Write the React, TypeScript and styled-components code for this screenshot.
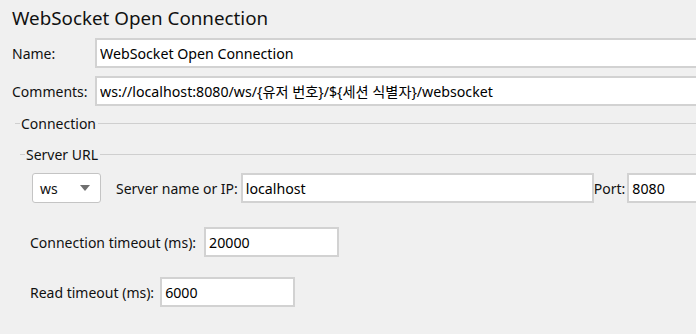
import React from 'react';
import styled, { createGlobalStyle } from 'styled-components';

const GlobalStyle = createGlobalStyle`
  html, body {
    margin: 0;
    padding: 0;
    background: #f0f0f0;
    overflow: hidden;
  }
  body {
    font-family: "Noto Sans", "Noto Sans CJK KR", sans-serif;
    color: #111;
  }
`;

const Page = styled.div`
  width: 760px;
  height: 334px;
  padding: 0 0 0 12px;
  box-sizing: border-box;
`;

const Title = styled.div`
  margin-top: 6px;
  height: 24px;
  line-height: 24px;
  font-size: 18.8px;
`;

const FieldRow = styled.div<{ $top: number }>`
  display: flex;
  align-items: center;
  margin-top: ${(p) => p.$top}px;
  height: 30px;
`;

const Label = styled.label<{ $width?: number; $gap?: number }>`
  font-size: 14px;
  white-space: nowrap;
  width: ${(p) => (p.$width ? `${p.$width}px` : 'auto')};
  flex: none;
  margin-right: ${(p) => p.$gap ?? 3}px;
`;

const TextBox = styled.input<{ $width?: number }>`
  box-sizing: border-box;
  height: 30px;
  border: 2px solid #d2d2d2;
  background: #fff;
  padding: 0 4px 0 3px;
  font-family: "Noto Sans", "Noto Sans CJK KR", sans-serif;
  font-size: 14.2px;
  color: #000;
  outline: none;
  flex: ${(p) => (p.$width ? 'none' : '1')};
  width: ${(p) => (p.$width ? `${p.$width}px` : 'auto')};
  min-width: 0;
`;

const Group = styled.div<{ $indent: number }>`
  margin-left: ${(p) => p.$indent}px;
`;

const GroupHeader = styled.div<{ $top: number }>`
  display: flex;
  align-items: center;
  height: 20px;
  margin-top: ${(p) => p.$top}px;
  font-size: 14px;

  &::before {
    content: '';
    width: 5px;
    height: 1px;
    background: #cfcfcf;
    margin-right: 1px;
  }

  &::after {
    content: '';
    flex: 1;
    height: 1px;
    background: #cfcfcf;
    margin-left: 2px;
  }
`;

const Combo = styled.div`
  box-sizing: border-box;
  width: 69px;
  height: 30px;
  border: 1px solid #c4c4c4;
  border-radius: 3px;
  background: #fff;
  display: flex;
  align-items: center;
  justify-content: space-between;
  padding: 0 10px 0 7px;
  font-size: 14px;
  margin-left: 12px;
  margin-right: 15px;
  flex: none;
`;

const Arrow = styled.span`
  width: 0;
  height: 0;
  border-left: 5px solid transparent;
  border-right: 5px solid transparent;
  border-top: 6px solid #6f6f6f;
`;

const TimeoutRow = styled(FieldRow)`
  margin-left: 10px;
`;

const App = () => (
  <Page>
    <GlobalStyle />
    <Title>WebSocket Open Connection</Title>
    <FieldRow $top={8}>
      <Label $width={83} $gap={0}>Name:</Label>
      <TextBox readOnly defaultValue="WebSocket Open Connection" />
    </FieldRow>
    <FieldRow $top={8}>
      <Label $width={83} $gap={0}>Comments:</Label>
      <TextBox readOnly defaultValue="ws://localhost:8080/ws/{유저 번호}/${세션 식별자}/websocket" />
    </FieldRow>
    <Group $indent={3}>
      <GroupHeader $top={7}>Connection</GroupHeader>
      <Group $indent={5}>
        <GroupHeader $top={11}>Server URL</GroupHeader>
        <FieldRow $top={9}>
          <Combo>
            ws
            <Arrow />
          </Combo>
          <Label>Server name or IP:</Label>
          <TextBox $width={353} readOnly defaultValue="localhost" />
          <Label $gap={2}>Port:</Label>
          <TextBox readOnly defaultValue="8080" />
        </FieldRow>
        <TimeoutRow $top={24}>
          <Label $gap={8}>Connection timeout (ms):</Label>
          <TextBox $width={135} readOnly defaultValue="20000" />
        </TimeoutRow>
        <TimeoutRow $top={20}>
          <Label $gap={6}>Read timeout (ms):</Label>
          <TextBox $width={135} readOnly defaultValue="6000" />
        </TimeoutRow>
      </Group>
    </Group>
  </Page>
);

export default App;
